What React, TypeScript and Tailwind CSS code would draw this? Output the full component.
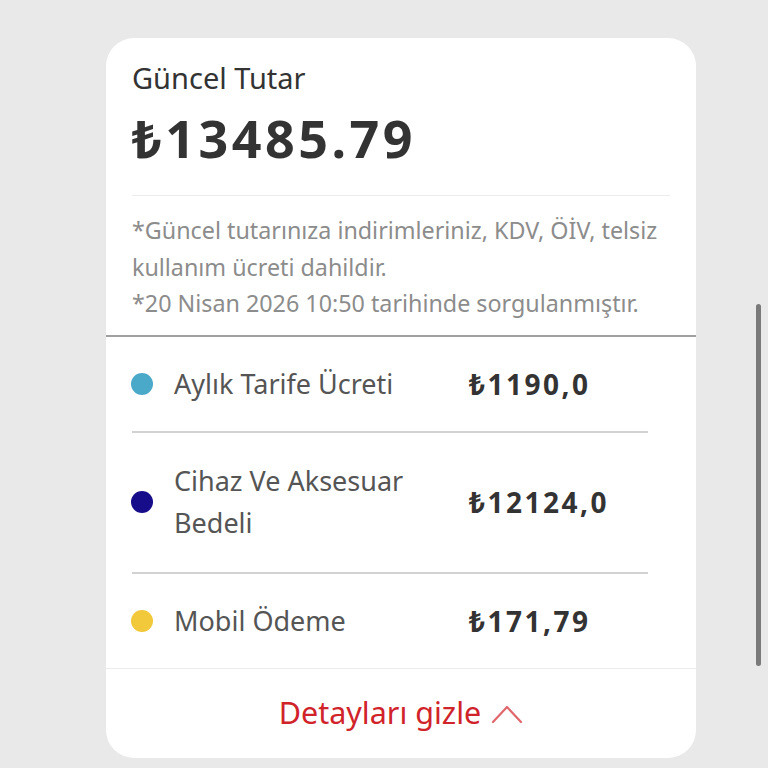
import { ReactNode } from "react";

const rows: { color: string; label: ReactNode; amount: string }[] = [
  { color: "bg-[#4aa8c9]", label: "Aylık Tarife Ücreti", amount: "₺1190,0" },
  {
    color: "bg-[#170c8a]",
    label: (
      <>
        Cihaz Ve Aksesuar
        <br />
        Bedeli
      </>
    ),
    amount: "₺12124,0",
  },
  { color: "bg-[#f2c93a]", label: "Mobil Ödeme", amount: "₺171,79" },
];

const App = () => {
  return (
    <div className="relative w-[768px] h-[768px] overflow-hidden bg-[#e9e9e9] font-['Noto_Sans',sans-serif]">
      <div className="ml-[106px] mt-[38px] w-[590px] rounded-[28px] bg-white">
        {/* Summary */}
        <div className="px-[26px] pt-[21px]">
          <p className="text-[29px] leading-[38px] text-[#333]">Güncel Tutar</p>
          <p className="mt-[11px] text-[52px] leading-[60px] font-bold tracking-[3.5px] text-[#333]">₺13485.79</p>
          <div className="mt-[27px] h-px bg-[#ececec]" />
          <p className="pt-[16px] pb-[13px] text-[23.3px] leading-[36.5px] text-[#8c8c8c]">
            *Güncel tutarınıza indirimleriniz, KDV, ÖİV, telsiz kullanım ücreti dahildir.
            <br />
            *20 Nisan 2026 10:50 tarihinde sorgulanmıştır.
          </p>
        </div>
        <div className="h-[2px] bg-[#a0a0a0]" />

        {/* Breakdown */}
        <div className="pl-[26px] pr-[48px]">
          {rows.map((row, i) => (
            <div
              key={i}
              className={`flex items-center ${i < rows.length - 1 ? "border-b-2 border-[#d2d2d2]" : ""} ${
                i === 0 ? "h-[96px]" : i === 1 ? "h-[141px]" : "h-[94px]"
              }`}
            >
              <span className={`ml-[-1px] mr-[21px] h-[22px] w-[22px] shrink-0 rounded-full ${row.color}`} />
              <span className="w-[295px] text-[27px] leading-[42px] text-[#555]">{row.label}</span>
              <span className="text-[28px] font-bold tracking-[2.5px] text-[#333]">{row.amount}</span>
            </div>
          ))}
        </div>
        <div className="h-px bg-[#ececec]" />

        {/* Toggle */}
        <button className="flex h-[89px] w-full items-center justify-center gap-[10px] text-[30.5px] text-[#d1232a]">
          Detayları gizle
          <svg width="32" height="22" viewBox="0 0 32 22" fill="none" className="mt-[2px]">
            <path d="M2 19 L16 4 L30 19" stroke="#e0676b" strokeWidth="2.2" strokeLinecap="round" strokeLinejoin="round" />
          </svg>
        </button>
      </div>

      {/* Scrollbar */}
      <div className="absolute left-[756px] top-[304px] h-[362px] w-[5px] rounded-full bg-[#7a7a7a]" />
    </div>
  );
};

export default App;
